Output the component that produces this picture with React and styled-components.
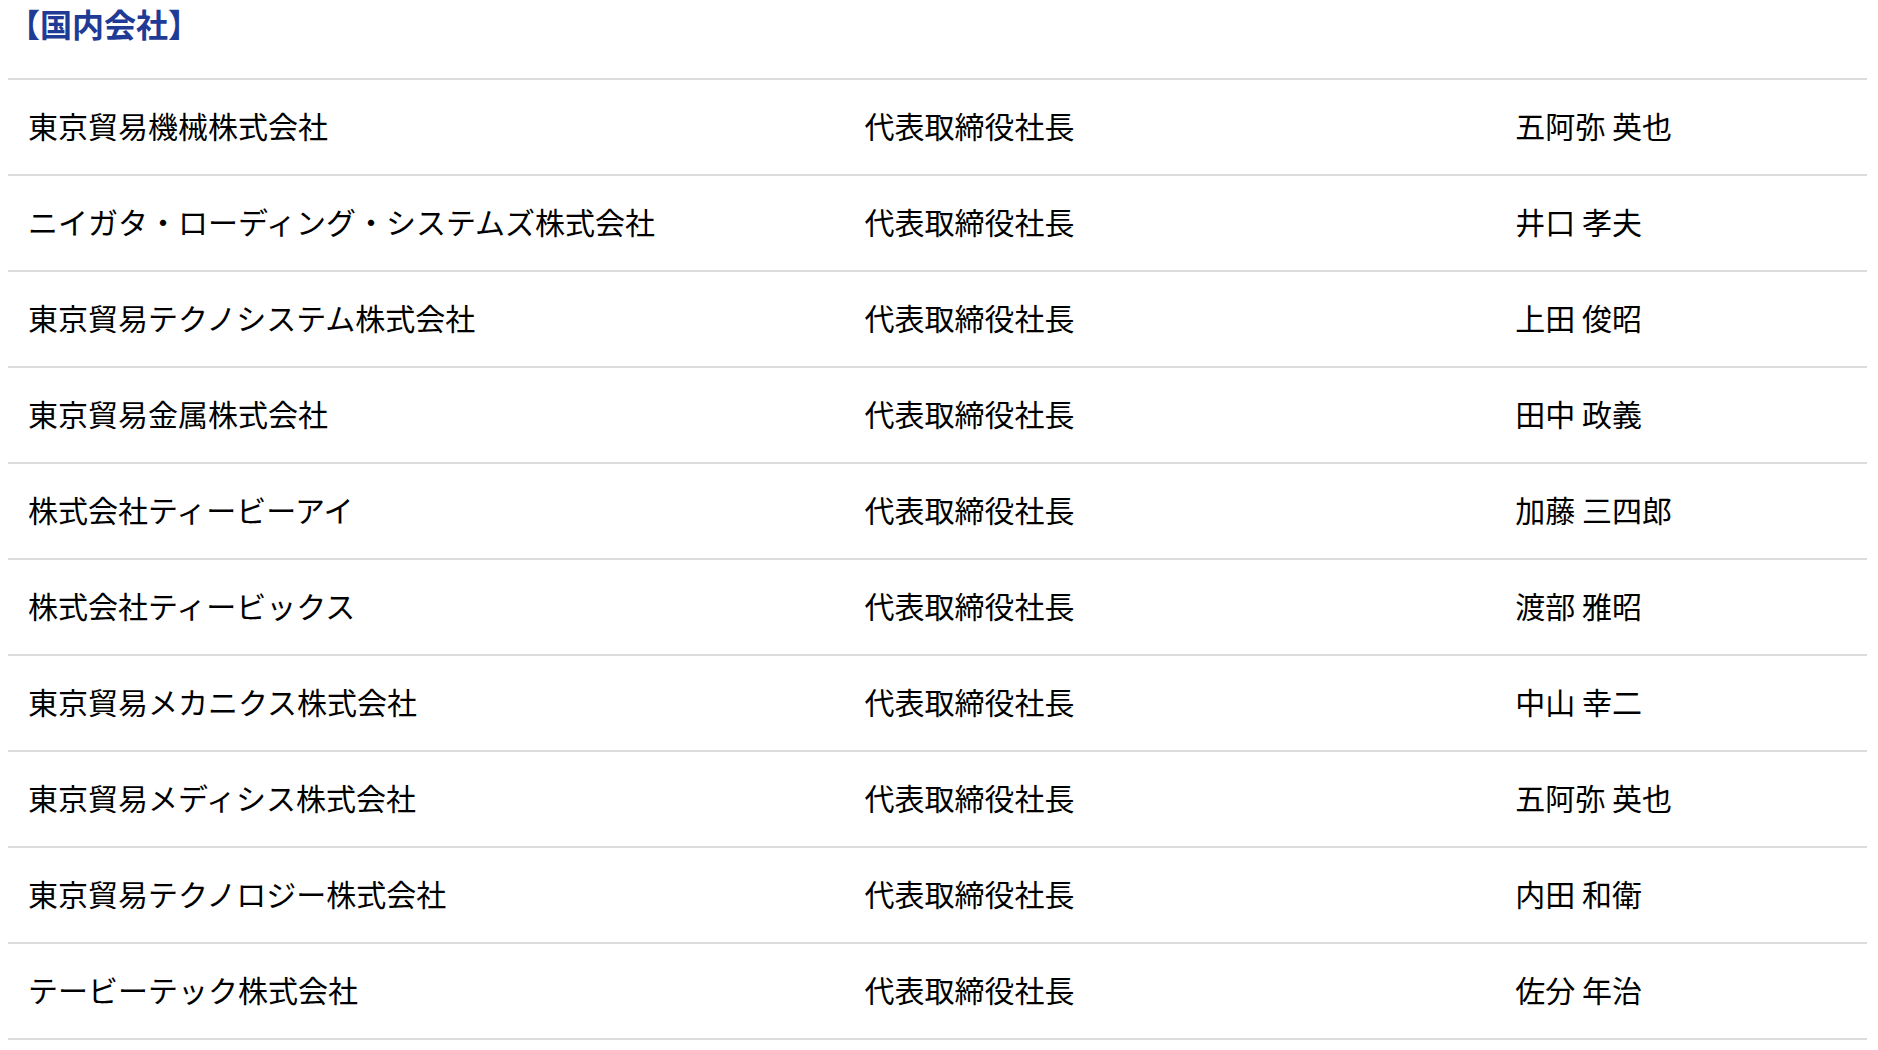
import styled, { createGlobalStyle } from 'styled-components';

const GlobalStyle = createGlobalStyle`
  html, body {
    margin: 0;
    padding: 0;
    background: #fff;
  }
  body {
    font-family: "Noto Sans CJK JP", "Noto Sans", sans-serif;
    color: #000;
  }
`;

const companies = [
  ['東京貿易機械株式会社', '代表取締役社長', '五阿弥 英也'],
  ['ニイガタ・ローディング・システムズ株式会社', '代表取締役社長', '井口 孝夫'],
  ['東京貿易テクノシステム株式会社', '代表取締役社長', '上田 俊昭'],
  ['東京貿易金属株式会社', '代表取締役社長', '田中 政義'],
  ['株式会社ティービーアイ', '代表取締役社長', '加藤 三四郎'],
  ['株式会社ティービックス', '代表取締役社長', '渡部 雅昭'],
  ['東京貿易メカニクス株式会社', '代表取締役社長', '中山 幸二'],
  ['東京貿易メディシス株式会社', '代表取締役社長', '五阿弥 英也'],
  ['東京貿易テクノロジー株式会社', '代表取締役社長', '内田 和衛'],
  ['テービーテック株式会社', '代表取締役社長', '佐分 年治'],
];

const App = () => {
  return (
    <>
      <GlobalStyle />
      <Section>
        <Heading>【国内会社】</Heading>
        <Table>
          {companies.map(([name, title, person]) => (
            <Row key={name + person}>
              <Cell>{name}</Cell>
              <Cell>{title}</Cell>
              <Cell>{person}</Cell>
            </Row>
          ))}
        </Table>
      </Section>
    </>
  );
};

const Section = styled.section`
  width: 1859px;
  margin-left: 8px;
`;

const Heading = styled.h2`
  margin: 0;
  padding: 6px 0 0 0;
  height: 78px;
  box-sizing: border-box;
  font-size: 32px;
  line-height: 34px;
  font-weight: 700;
  color: #1f3b95;
`;

const Table = styled.div`
  border-top: 2px solid #dcdcdc;
`;

const Row = styled.div`
  display: grid;
  grid-template-columns: 45% 35% 20%;
  height: 96px;
  box-sizing: border-box;
  border-bottom: 2px solid #dcdcdc;
  align-items: center;
`;

const Cell = styled.div`
  padding: 0 20px 4px 20px;
  font-size: 30px;
  line-height: 40px;
  white-space: nowrap;
`;

export default App;
